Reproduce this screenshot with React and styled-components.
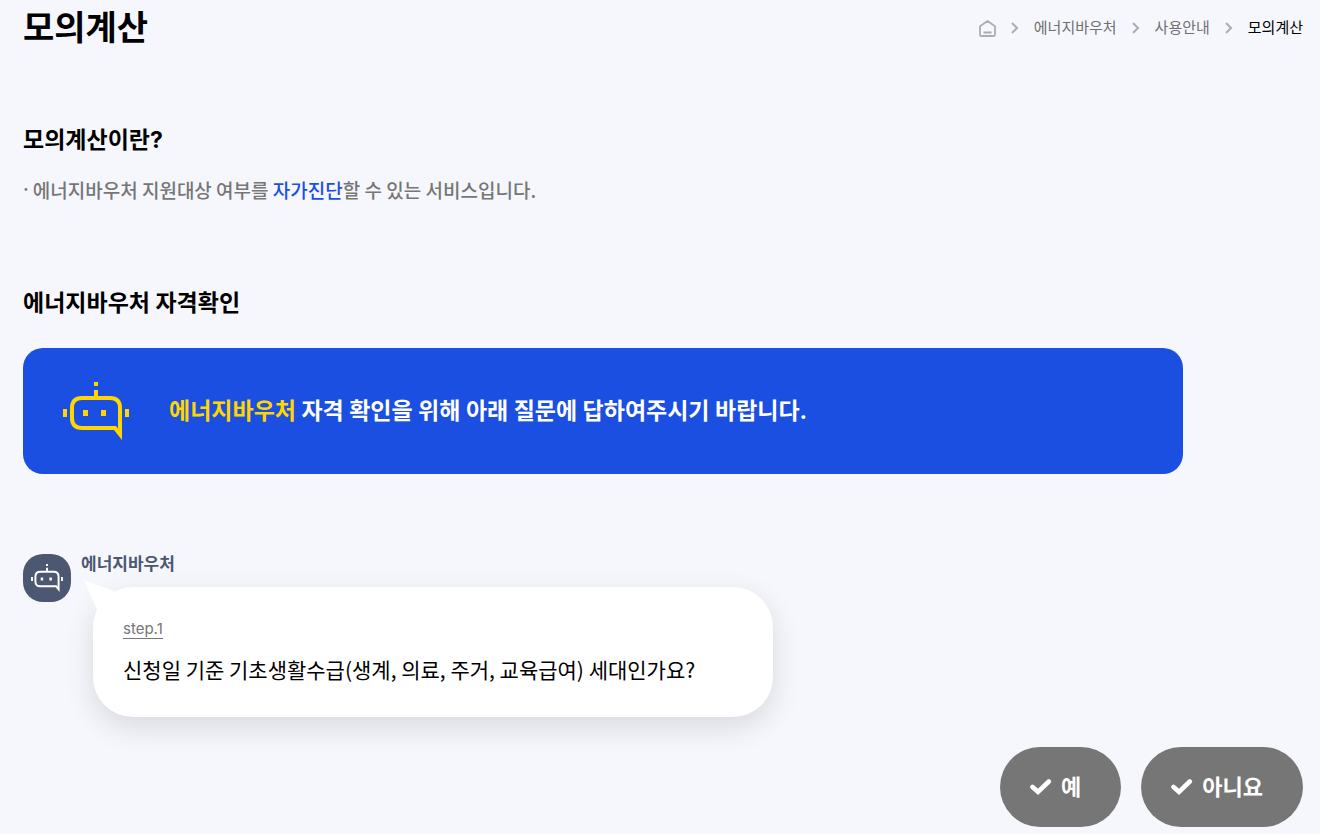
import React from "react";
import styled, { createGlobalStyle } from "styled-components";

const GlobalStyle = createGlobalStyle`
  *, *::before, *::after { box-sizing: border-box; }
  body {
    margin: 0;
    background: #f6f7fd;
    color: #000;
    font-family: Inter, "Noto Sans CJK KR", sans-serif;
  }
  h1, h2, p, ol, ul { margin: 0; padding: 0; }
`;

const Page = styled.main`
  padding: 4px 17px 7px 23px;
`;

const Header = styled.header`
  display: flex;
  align-items: center;
  justify-content: space-between;
`;

const Title = styled.h1`
  font-size: 34px;
  line-height: 48px;
  font-weight: 700;
`;

const Crumbs = styled.ol`
  display: flex;
  align-items: center;
  list-style: none;
`;

const Crumb = styled.li`
  display: flex;
  align-items: center;
`;

const CrumbLink = styled.a`
  display: flex;
  color: ${({ $current }) => ($current ? "#000" : "#6f6f6f")};
  font-size: 15px;
  line-height: 24px;
  text-decoration: none;
`;

const Separator = styled.svg`
  margin: 0 15px;
`;

const Section = styled.section`
  margin-top: ${({ $gap }) => $gap}px;
`;

const Heading = styled.h2`
  font-size: 23px;
  line-height: 32px;
  font-weight: 700;
`;

const Notes = styled.ul`
  margin-top: 20px;
  list-style: none;
`;

const Note = styled.li`
  display: flex;
  gap: 4px;
  color: #767676;
  font-size: 19px;
  line-height: 28px;
  font-weight: 500;
`;

const NoteText = styled.span`
  font-family: "Noto Sans CJK KR", sans-serif;
`;

const Mark = styled.span`
  color: ${({ $color }) => $color};
`;

const Banner = styled.div`
  display: flex;
  align-items: center;
  gap: 40px;
  max-width: 1160px;
  min-height: 126px;
  margin-top: 29px;
  padding: 30px 40px;
  border-radius: 20px;
  background: #1b4fe1;
`;

const BannerText = styled.p`
  color: #fff;
  font-size: 23px;
  line-height: 32px;
  font-weight: 700;
`;

const Chat = styled.div`
  display: flex;
  align-items: flex-start;
  gap: 10px;
  margin-top: 80px;
`;

const Avatar = styled.div`
  display: flex;
  flex: none;
  align-items: center;
  justify-content: center;
  width: 48px;
  height: 48px;
  border-radius: 20px;
  background: #4c5872;
`;

const Message = styled.div`
  flex: 1;
  max-width: 692px;
`;

const Sender = styled.p`
  color: #4c5872;
  font-size: 17px;
  line-height: 20px;
  font-weight: 700;
`;

const Bubble = styled.div`
  position: relative;
  min-height: 130px;
  margin: 13px 0 0 12px;
  padding: 32px 30px;
  border-radius: 40px;
  background: #fff;
  box-shadow: 0 10px 30px rgba(0, 0, 0, 0.12);
`;

const Tail = styled.svg`
  position: absolute;
  top: -8px;
  left: -10px;
`;

const Step = styled.p`
  width: fit-content;
  border-bottom: 1px solid #767676;
  color: #767676;
  font-size: 15px;
  line-height: 19px;
`;

const Question = styled.p`
  margin-top: 14px;
  font-family: "Noto Sans CJK KR", sans-serif;
  font-size: 21px;
  line-height: 32px;
`;

const Answers = styled.div`
  display: flex;
  justify-content: flex-end;
  gap: 20px;
  margin-top: 30px;
`;

const Answer = styled.button`
  display: flex;
  align-items: center;
  gap: 9px;
  height: 80px;
  padding: 0 40px 0 30px;
  border: 0;
  border-radius: 40px;
  background: #767676;
  color: #fff;
  font: 600 22px/32px Inter, "Noto Sans CJK KR", sans-serif;
  cursor: pointer;
`;

function Robot({ width, height, color }) {
  return (
    <svg width={width} height={height} viewBox="0 0 66 58" fill={color} aria-hidden="true">
      <path d="M31 0h4v4h-4zM31 8h4v7h-4zM0 27h4v8H0zM62 27h4v8h-4zM20 28h5v6h-5zM38 28h5v6h-5z" />
      <path fillRule="evenodd" d="M19 14H47Q59 14 59 26V58L51 48H19Q7 48 7 36V26Q7 14 19 14ZM19 18Q11 18 11 26V36Q11 44 19 44H53L55 46.500V26Q55 18 47 18Z" />
    </svg>
  );
}

function Chevron() {
  return (
    <Separator width="8" height="12" viewBox="0 0 8 12" fill="none" stroke="#adadb0" strokeWidth="2" aria-hidden="true">
      <path d="M1 1l5 5-5 5" />
    </Separator>
  );
}

function Check() {
  return (
    <svg width="22" height="16" viewBox="0 0 22 16" fill="none" stroke="#fff" strokeWidth="4.600" strokeLinecap="round" strokeLinejoin="miter" aria-hidden="true">
      <path d="M2.500 8l5.500 4.800L18.800 2.500" />
    </svg>
  );
}

const trail = ["에너지바우처", "사용안내", "모의계산"];

export default function App() {
  return (
    <>
      <GlobalStyle />
      <Page>
        <Header>
          <Title>모의계산</Title>
          <nav aria-label="breadcrumb">
            <Crumbs>
              <Crumb>
                <CrumbLink href="#" aria-label="홈">
                  <svg width="17" height="17" viewBox="0 0 17 17" fill="none" stroke="#adadb0" strokeWidth="1.800" strokeLinejoin="round" aria-hidden="true">
                    <path d="M1 6.200L8.500 1L16 6.200v8.300Q16 16 14.500 16h-12Q1 16 1 14.500ZM4.500 12.500h8" />
                  </svg>
                </CrumbLink>
              </Crumb>
              {trail.map((name, i) => (
                <Crumb key={name}>
                  <Chevron />
                  <CrumbLink href="#" $current={i === trail.length - 1}>{name}</CrumbLink>
                </Crumb>
              ))}
            </Crumbs>
          </nav>
        </Header>

        <Section $gap={72}>
          <Heading>모의계산이란?</Heading>
          <Notes>
            <Note>
              <span>·</span>
              <NoteText>
                에너지바우처 지원대상 여부를 <Mark $color="#1b4fe1">자가진단</Mark>할 수 있는 서비스입니다.
              </NoteText>
            </Note>
          </Notes>
        </Section>

        <Section $gap={83}>
          <Heading>에너지바우처 자격확인</Heading>
          <Banner>
            <Robot width={66} height={58} color="#ffd600" />
            <BannerText>
              <Mark $color="#ffd600">에너지바우처</Mark> 자격 확인을 위해 아래 질문에 답하여주시기 바랍니다.
            </BannerText>
          </Banner>

          <Chat>
            <Avatar>
              <Robot width={32} height={28} color="#fff" />
            </Avatar>
            <Message>
              <Sender>에너지바우처</Sender>
              <Bubble>
                <Tail width="34" height="34" viewBox="0 0 34 34" fill="#fff" aria-hidden="true">
                  <path d="M1 1L31 12L34 34L14 31Z" />
                </Tail>
                <Step>step.1</Step>
                <Question>신청일 기준 기초생활수급(생계, 의료, 주거, 교육급여) 세대인가요?</Question>
              </Bubble>
            </Message>
          </Chat>

          <Answers>
            <Answer type="button"><Check />예</Answer>
            <Answer type="button"><Check />아니요</Answer>
          </Answers>
        </Section>
      </Page>
    </>
  );
}
